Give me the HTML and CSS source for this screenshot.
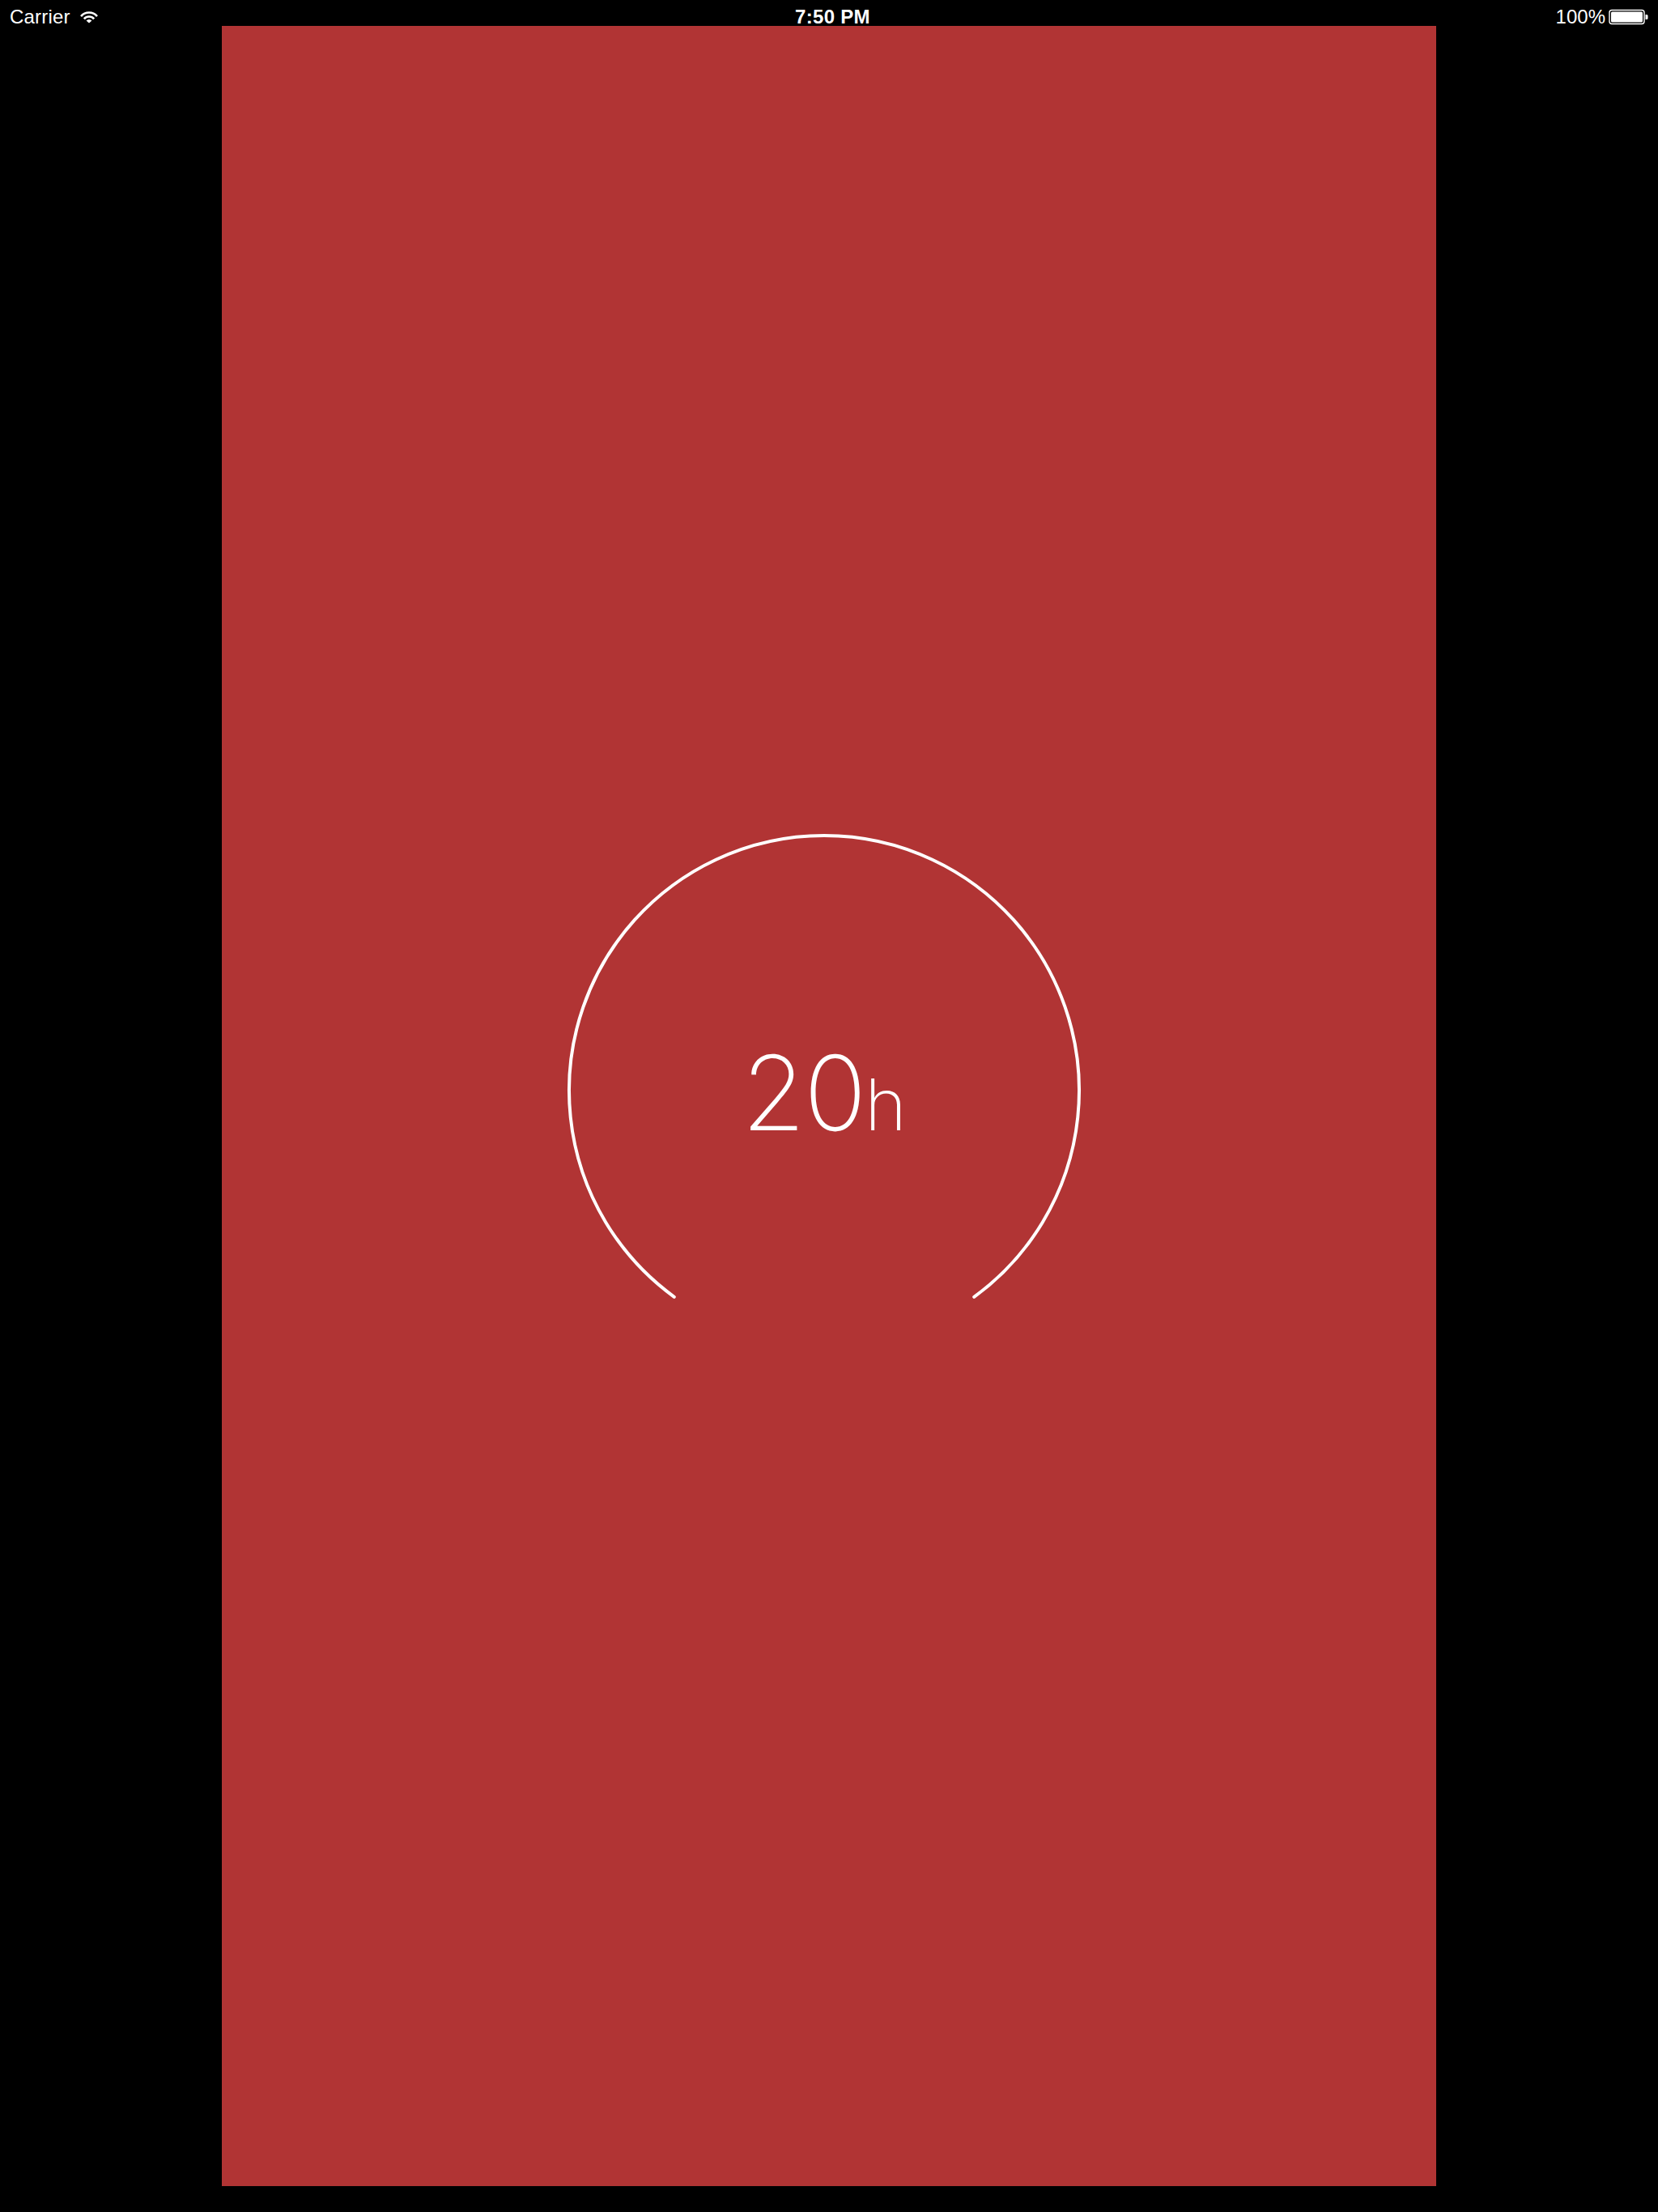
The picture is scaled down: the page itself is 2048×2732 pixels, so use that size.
FILE: index.html
```html
<!DOCTYPE html>
<html>
<head>
<meta charset="utf-8">
<link rel="stylesheet" href="styles.css">
</head>
<body>
<div class="statusbar">
  <div class="sb-left">
    <span class="carrier">Carrier</span>
    <svg class="wifi" width="24" height="16" viewBox="0 0 24 16">
      <path d="M12 15.5 L8.55 12.61 A4.5 4.5 0 0 1 15.45 12.61 Z" fill="#fff"/>
      <path d="M5.87 10.36 A8 8 0 0 1 18.13 10.36" fill="none" stroke="#fff" stroke-width="2.6"/>
      <path d="M2.04 7.14 A13 13 0 0 1 21.96 7.14" fill="none" stroke="#fff" stroke-width="2.6"/>
    </svg>
  </div>
  <div class="sb-time">7:50 PM</div>
  <div class="sb-right">
    <span class="pct">100%</span>
    <svg class="battery" width="50" height="20" viewBox="0 0 50 20">
      <rect x="1" y="1.5" width="43" height="17" rx="3" fill="none" stroke="#fff" stroke-width="1.4"/>
      <rect x="3" y="3.5" width="39" height="13" rx="1.5" fill="#fff"/>
      <path d="M45.5 7 h1.5 a1.5 1.5 0 0 1 1.5 1.5 v3 a1.5 1.5 0 0 1 -1.5 1.5 h-1.5 z" fill="#fff"/>
    </svg>
  </div>
</div>
<main class="panel">
  <div class="dial">
    <svg class="ring" width="640" height="640" viewBox="0 0 640 640">
      <path d="M134.8 574.8 A315 315 0 1 1 505.2 574.8" fill="none" stroke="#fff" stroke-width="4" stroke-linecap="round"/>
    </svg>
    <div class="value"><span class="num">20</span><span class="unit">h</span></div>
  </div>
</main>
</body>
</html>
```

FILE: styles.css
```css
html, body {
  margin: 0;
  padding: 0;
  background: #000;
}
body {
  width: 2048px;
  height: 2732px;
  overflow: hidden;
  font-family: "Liberation Sans", Arial, sans-serif;
  color: #fff;
}
.statusbar {
  box-sizing: border-box;
  height: 32px;
  display: flex;
  align-items: flex-start;
  justify-content: space-between;
  padding: 5px 11px 0 12px;
  font-size: 24px;
  line-height: 32px;
}
.sb-left {
  display: flex;
  align-items: center;
  gap: 11px;
  width: 300px;
  height: 32px;
}
.carrier {
  letter-spacing: 0.2px;
}
.wifi {
  margin-top: 0;
}
.sb-time {
  font-weight: 700;
  letter-spacing: 0.3px;
  margin-left: 8px;
}
.sb-right {
  display: flex;
  align-items: center;
  justify-content: flex-end;
  gap: 4px;
  width: 300px;
  height: 32px;
}
.battery {
  margin-top: 0;
}
.panel {
  margin: 0 274px;
  height: 2668px;
  background: #b13434;
  display: flex;
  align-items: center;
  justify-content: center;
}
.dial {
  display: grid;
  width: 640px;
  height: 640px;
  margin: 0 12px 38px 0;
}
.ring {
  grid-area: 1 / 1;
}
.value {
  grid-area: 1 / 1;
  align-self: start;
  justify-self: center;
  padding-top: 259px;
  font-family: Inter, "Liberation Sans", sans-serif;
  font-weight: 200;
  line-height: 1;
  white-space: nowrap;
  margin-left: 0;
}
.num {
  font-size: 128px;
  letter-spacing: -2px;
}
.unit {
  font-size: 88px;
  margin-left: 0;
}
```
